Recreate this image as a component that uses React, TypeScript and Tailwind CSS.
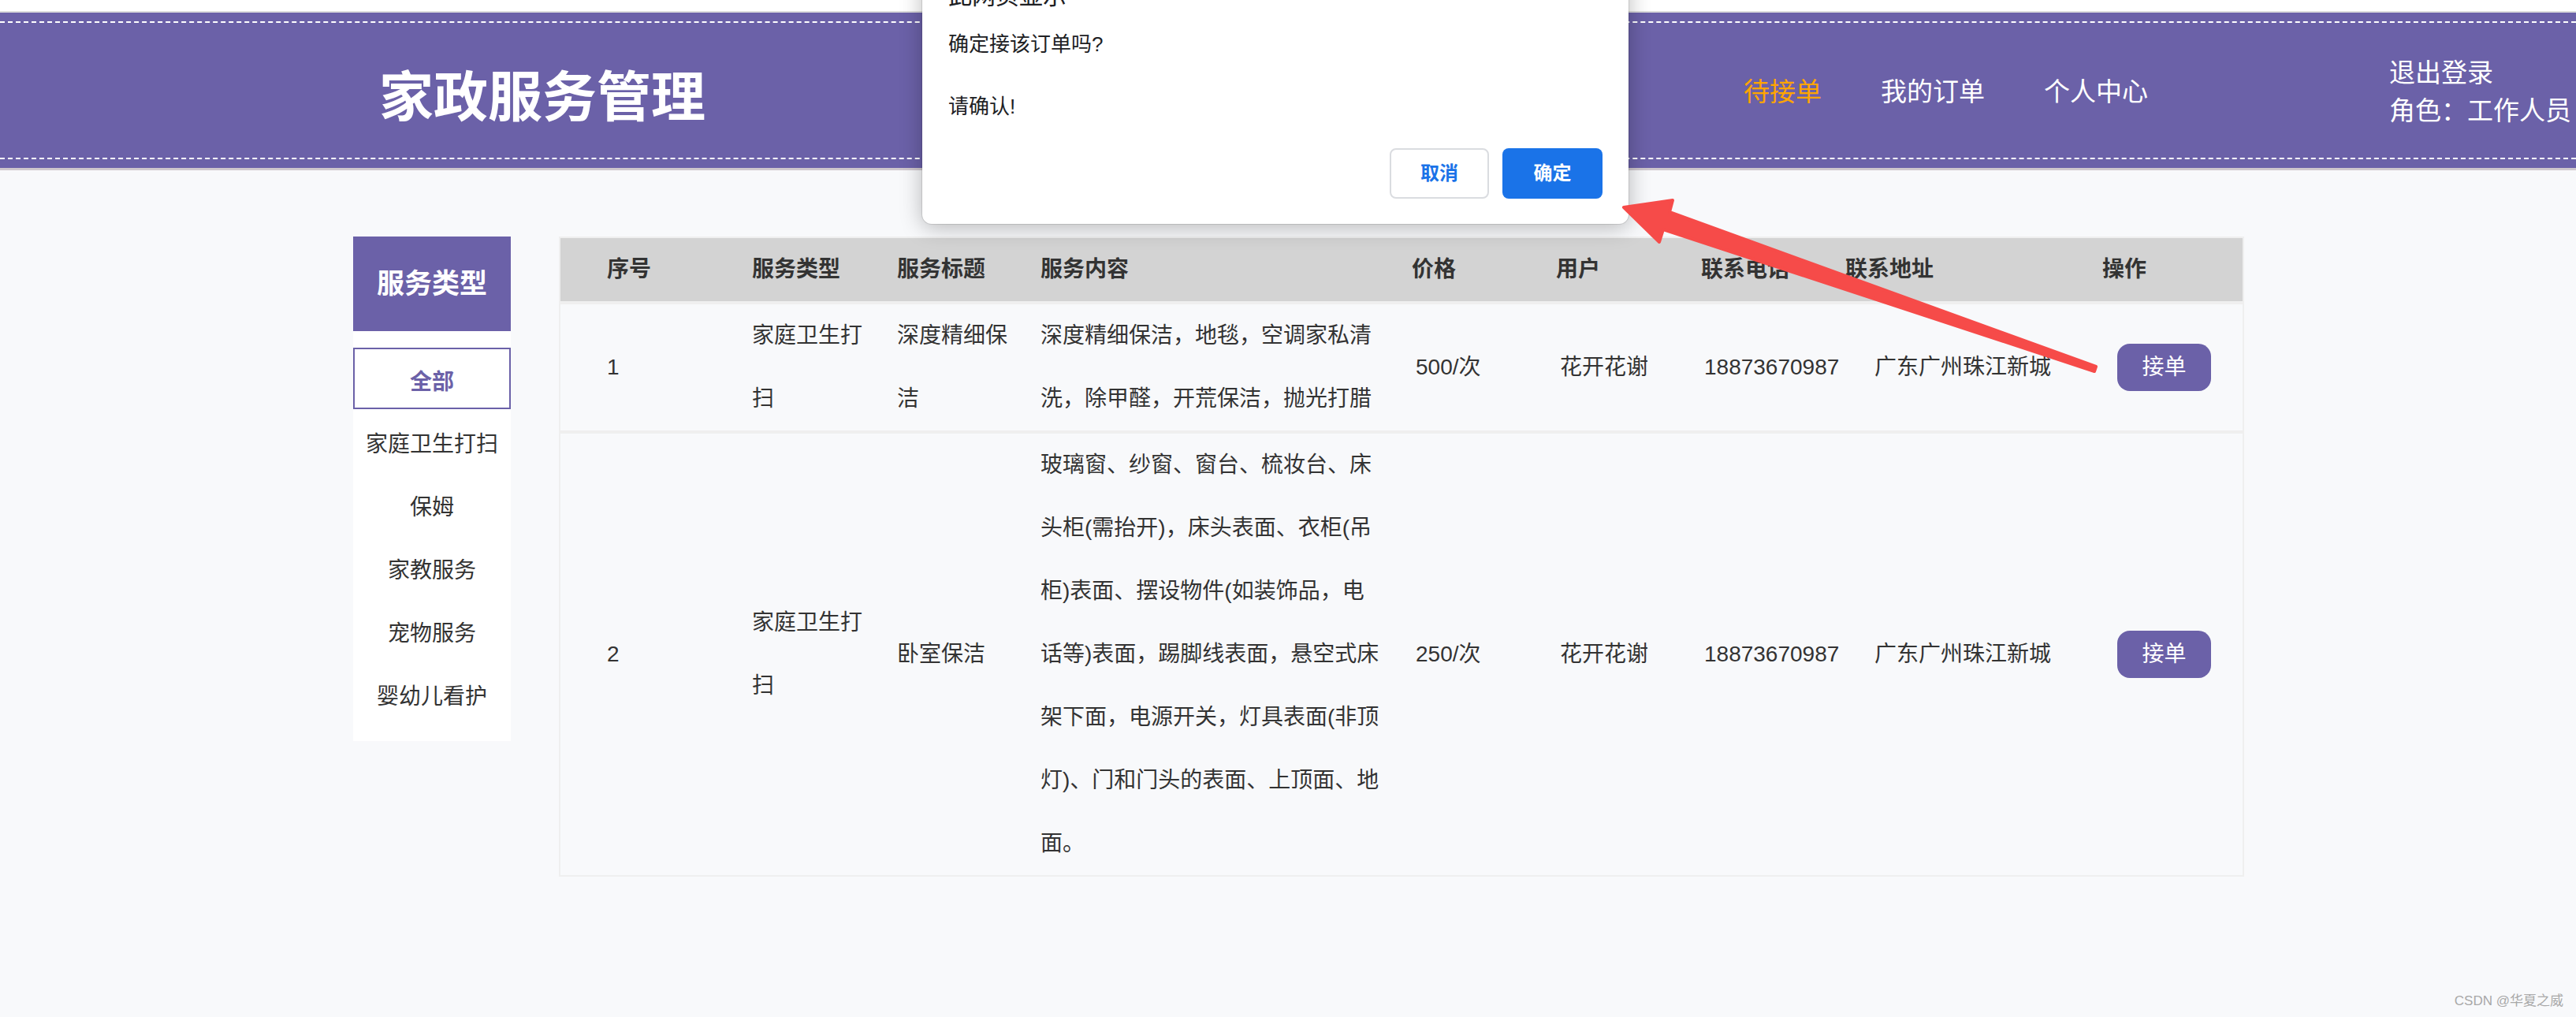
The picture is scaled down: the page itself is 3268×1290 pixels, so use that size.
const purple = 'bg-[#6b61a8]';

const orders = [
	{
		id: 1,
		type: '家庭卫生打扫',
		title: '深度精细保洁',
		content: '深度精细保洁，地毯，空调家私清洗，除甲醛，开荒保洁，抛光打腊',
		price: '500/次',
		user: '花开花谢',
		phone: '18873670987',
		address: '广东广州珠江新城',
	},
	{
		id: 2,
		type: '家庭卫生打扫',
		title: '卧室保洁',
		content:
			'玻璃窗、纱窗、窗台、梳妆台、床头柜(需抬开)，床头表面、衣柜(吊柜)表面、摆设物件(如装饰品，电话等)表面，踢脚线表面，悬空式床架下面，电源开关，灯具表面(非顶灯)、门和门头的表面、上顶面、地面。',
		price: '250/次',
		user: '花开花谢',
		phone: '18873670987',
		address: '广东广州珠江新城',
	},
];

const categories = ['家庭卫生打扫', '保姆', '家教服务', '宠物服务', '婴幼儿看护'];

const heads = ['序号', '服务类型', '服务标题', '服务内容', '价格', '用户', '联系电话', '联系地址', '操作'];
const headPad = ['pl-[59px]', 'pl-[30px]', 'pl-[30px]', 'pl-[30px]', 'pl-[30px]', 'pl-[30px]', 'pl-[30px]', 'pl-[30px]', 'pl-[30px]'];

const gridCols = 'grid grid-cols-[213px_184px_182px_471px_183px_184px_183px_326px_1fr]';

function Header() {
	return (
		<div className="bg-white pt-[14px]">
			<header className={`${purple} h-[202px] border-t-2 border-b-[3px] border-t-[#dddddd] border-b-[#cfc7cd] py-[11px]`}>
				<div className="flex h-full items-center border-y-2 border-dashed border-white text-white">
					<div className="w-[2212px] pl-[481px]">
						<h1 className="mt-[20px] font-bold text-[69px] leading-none">家政服务管理</h1>
					</div>
					<nav className="mt-[4px] flex w-[819px] gap-[75px] text-[33px] leading-none">
						<a className="text-[#ffa500]">待接单</a>
						<a>我的订单</a>
						<a>个人中心</a>
					</nav>
					<div className="mt-[4px] flex flex-col whitespace-nowrap text-[33px] leading-[48px]">
						<span>退出登录</span>
						<span>角色：工作人员</span>
					</div>
				</div>
			</header>
		</div>
	);
}

function Sidebar() {
	return (
		<aside className="w-[200px] shrink-0">
			<div className={`${purple} flex h-[120px] items-center justify-center font-bold text-[35px] text-white`}>
				服务类型
			</div>
			<div className="bg-white pt-[21px] pb-[16px] text-[28px] text-[#333333]">
				<div className="mb-[5px] flex h-[78px] items-center justify-center border-2 border-[#6b61a8] pt-[10px] font-bold text-[#6b61a8]">
					全部
				</div>
				{categories.map((c) => (
					<div key={c} className="flex h-[80px] items-center justify-center">
						{c}
					</div>
				))}
			</div>
		</aside>
	);
}

function OrderTable() {
	return (
		<div className="w-[2138px] border-2 border-[#efefef] text-[28px] text-[#333333]">
			<div className={`${gridCols} h-[80px] items-center bg-[#d3d3d3] font-bold`}>
				{heads.map((h, i) => (
					<div key={h} className={headPad[i]}>
						{h}
					</div>
				))}
			</div>
			{orders.map((o) => (
				<div key={o.id} className={`${gridCols} border-t-4 border-[#efefef] leading-[80px]`}>
					<div className="flex items-center pl-[59px]">{o.id}</div>
					<div className="flex items-center pl-[30px]">{o.type}</div>
					<div className="flex items-center pl-[30px]">{o.title}</div>
					<div className="flex items-center pl-[30px]">
						<p className="w-[434px]">{o.content}</p>
					</div>
					<div className="flex items-center pl-[35px]">{o.price}</div>
					<div className="flex items-center pl-[35px]">{o.user}</div>
					<div className="flex items-center pl-[34px]">{o.phone}</div>
					<div className="flex items-center pl-[67px]">{o.address}</div>
					<div className="flex items-center pl-[49px]">
						<button className={`${purple} h-[60px] w-[119px] rounded-[16px] text-[28px] leading-none text-white`}>
							接单
						</button>
					</div>
				</div>
			))}
		</div>
	);
}

function ConfirmDialog() {
	return (
		<div className="absolute top-[-46px] left-[1170px] w-[896px] rounded-[12px] bg-white px-[33px] pt-[23px] pb-[32px] text-[#202124] shadow-[0_4px_28px_rgba(0,0,0,0.28)] ring-1 ring-black/10">
			<div className="text-[30px] leading-[36px]">此网页显示</div>
			<p className="mt-[24px] whitespace-pre-line text-[26px] leading-[39.5px]">{'确定接该订单吗?\n\n请确认!'}</p>
			<div className="mt-[32px] flex justify-end gap-[17px]">
				<button className="h-[64px] w-[126px] rounded-[8px] border-2 border-[#dadce0] bg-white font-semibold text-[#1a73e8] text-[24px]">
					取消
				</button>
				<button className="h-[64px] w-[127px] rounded-[8px] bg-[#1a73e8] font-semibold text-[24px] text-white">
					确定
				</button>
			</div>
		</div>
	);
}

function Arrow() {
	return (
		<svg className="pointer-events-none absolute top-0 left-0" width="3268" height="1290" viewBox="0 0 3268 1290">
			<polygon
				points="2060,263 2122,254 2118,269 2659,465 2657,471 2110,291 2105,307"
				fill="#f64b49"
				stroke="#f64b49"
				strokeWidth="4"
				strokeLinejoin="round"
			/>
		</svg>
	);
}

export default function App() {
	return (
		<div className="relative min-h-[1290px] w-full overflow-hidden bg-[#f8f9fb] font-['Liberation_Sans','Noto_Sans_CJK_SC',sans-serif]">
			<Header />
			<main className="flex gap-[61px] pt-[84px] pl-[448px]">
				<Sidebar />
				<OrderTable />
			</main>
			<ConfirmDialog />
			<Arrow />
			<div className="absolute right-[16px] bottom-[8px] text-[17px] text-[#a8a8a8]">CSDN @华夏之威</div>
		</div>
	);
}
